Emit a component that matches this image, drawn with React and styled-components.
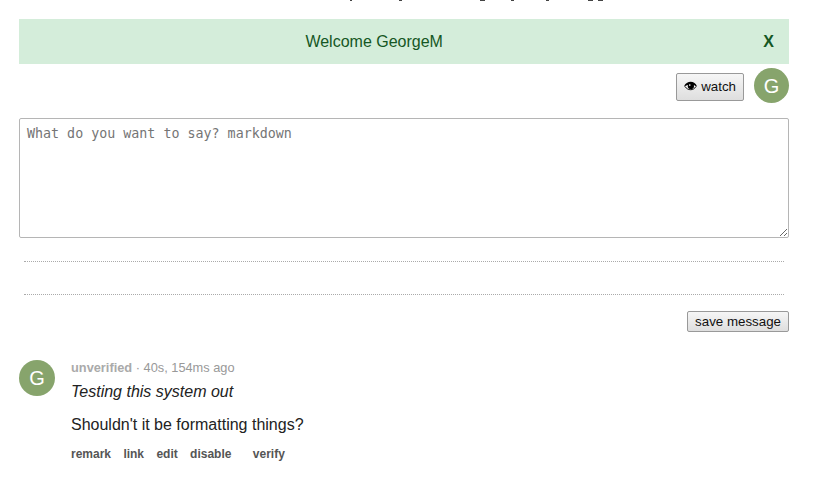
import React from "react";
import styled, { createGlobalStyle } from "styled-components";

const Global = createGlobalStyle`
  *, *::before, *::after { box-sizing: border-box; }
  body {
    margin: 0;
    background: #fff;
    color: #222;
    font: 16px/24px "Liberation Sans", Arial, sans-serif;
  }
`;

const Page = styled.main`
  padding: 0 25px 24px 19px;
`;

const TopEdge = styled.svg`
  display: block;
  width: 256px;
  height: 2px;
  margin: 0 0 17px 330px;
`;

const Notice = styled.div`
  display: flex;
  align-items: center;
  gap: 49px;
  padding: 11px 15px 10px;
  background: #d4edda;
  color: #155724;
`;

const NoticeText = styled.span`
  flex: 1;
  text-align: center;
`;

const Close = styled.button`
  padding: 0;
  border: 0;
  background: none;
  color: inherit;
  font: inherit;
  font-weight: bold;
  cursor: pointer;
`;

const Toolbar = styled.div`
  display: flex;
  justify-content: flex-end;
  align-items: flex-end;
  gap: 10px;
  padding: 4px 0 15px;
`;

const Button = styled.button`
  display: flex;
  align-items: center;
  gap: 4px;
  height: ${(p) => (p.$tall ? 28 : 21)}px;
  margin-bottom: ${(p) => (p.$tall ? 2 : 0)}px;
  padding: 0 7px ${(p) => (p.$tall ? 2 : 0)}px;
  border: 1px solid #999;
  border-radius: 2px;
  background: linear-gradient(#f6f6f6, #dedede);
  color: #111;
  font-family: "Liberation Sans", Arial, sans-serif;
  line-height: 15px;
  cursor: pointer;
`;

const Avatar = styled.span`
  flex: none;
  width: ${(p) => p.$size}px;
  height: ${(p) => p.$size}px;
  border-radius: 50%;
  background: #87a46c;
  color: #fff;
  font-size: 20px;
  line-height: ${(p) => p.$size + 1}px;
  text-align: center;
`;

const Message = styled.textarea`
  display: block;
  width: 100%;
  height: 120px;
  padding: 7px;
  border: 1px solid #b5b5b5;
  border-radius: 2px;
  background: #fff;
  font-family: "DejaVu Sans Mono", monospace;
  line-height: 16px;
  resize: vertical;
  &::placeholder { color: #757575; }
`;

const Divider = styled.hr`
  margin: ${(p) => p.$top}px 5px 0;
  border: 0;
  border-top: 1px dotted #aaa;
`;

const Actions = styled.div`
  display: flex;
  justify-content: flex-end;
  padding: 16px 0 28px;
`;

const Comment = styled.article`
  display: flex;
  gap: 16px;
`;

const Meta = styled.div`
  color: #999;
  font-size: 80%;
  line-height: 16px;
`;

const Status = styled.strong`
  color: #aaa;
`;

const Body = styled.div`
  padding-top: 4px;
  p { margin: 0 0 9px; }
`;

const Links = styled.nav`
  font-size: 12px;
  line-height: 16px;
`;

const Link = styled.a`
  margin-left: ${(p) => (p.$apart ? 9 : 0)}px;
  margin-right: 9px;
  color: #555;
  font-weight: bold;
  text-decoration: none;
`;

function Eye() {
  return (
    <svg width="13" height="12" viewBox="0 0 14 12" aria-hidden="true">
      <path d="M1 6.5C3 3.6 5 2.7 7.2 2.7S11.5 3.8 13 6.5C11.4 9 9.4 10 7.2 10S2.6 9 1 6.5Z" fill="#fff" stroke="#000" />
      <path d="M0 6C2 2.4 4.6 1.3 7.2 1.3S12.2 2.6 14 6L10 4.8H4Z" />
      <circle cx="7.4" cy="6" r="3.4" />
      <circle cx="6.2" cy="4.9" r=".9" fill="#fff" />
    </svg>
  );
}

export default function App() {
  return (
    <>
      <Global />
      <Page>
        <TopEdge viewBox="0 0 256 2" aria-hidden="true">
          <path d="M1 0h2v1H1zM50 0h3v1h-3zM131 0h5v1h-5zM162 0h3v1h-3zM197 0h3v1h-3zM239 0h5v1h-5zM249 0h5v1h-5z" fill="#444" />
        </TopEdge>
        <Notice role="status">
          <NoticeText>Welcome GeorgeM</NoticeText>
          <Close type="button">X</Close>
        </Notice>
        <Toolbar>
          <Button type="button" $tall><Eye />watch</Button>
          <Avatar $size={35}>G</Avatar>
        </Toolbar>
        <Message aria-label="Message" placeholder="What do you want to say? markdown" />
        <Divider $top={23} />
        <Divider $top={32} />
        <Actions>
          <Button type="submit">save message</Button>
        </Actions>
        <Comment>
          <Avatar $size={36}>G</Avatar>
          <div>
            <Meta><Status>unverified</Status> · 40s, 154ms ago</Meta>
            <Body>
              <p><em>Testing this system out</em></p>
              <p>Shouldn't it be formatting things?</p>
            </Body>
            <Links aria-label="Comment actions">
              <Link href="#remark">remark</Link>{" "}
              <Link href="#link">link</Link>{" "}
              <Link href="#edit">edit</Link>{" "}
              <Link href="#disable">disable</Link>{" "}
              <Link href="#verify" $apart>verify</Link>
            </Links>
          </div>
        </Comment>
      </Page>
    </>
  );
}
